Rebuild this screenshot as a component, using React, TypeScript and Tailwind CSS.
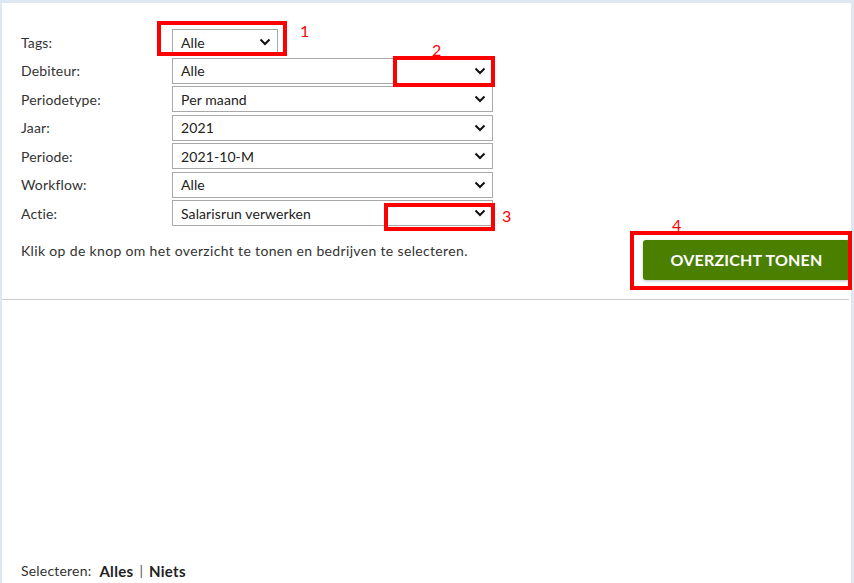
import React from 'react';

const font = { fontFamily: 'Lato, "Noto Sans", sans-serif' };

interface SelectProps {
  value: string;
  wide?: boolean;
}

function Chevron() {
  return (
    <svg width="12" height="8" viewBox="0 0 12 8" className="shrink-0">
      <polyline points="1.5,1.5 6,6 10.5,1.5" fill="none" stroke="#111" strokeWidth="2" />
    </svg>
  );
}

function FakeSelect({ value, wide = true }: SelectProps) {
  return (
    <div
      className={`flex h-[26px] items-center justify-between border border-[#a9a9a9] bg-white pl-[8px] pr-[6px] text-[14px] tracking-[0.1px] text-[#222] ${
        wide ? 'w-[321px]' : 'w-[106px]'
      }`}
    >
      <span>{value}</span>
      <Chevron />
    </div>
  );
}

const rows: { label: string; value: string; wide?: boolean }[] = [
  { label: 'Tags:', value: 'Alle', wide: false },
  { label: 'Debiteur:', value: 'Alle' },
  { label: 'Periodetype:', value: 'Per maand' },
  { label: 'Jaar:', value: '2021' },
  { label: 'Periode:', value: '2021-10-M' },
  { label: 'Workflow:', value: 'Alle' },
  { label: 'Actie:', value: 'Salarisrun verwerken' },
];

// red annotation boxes drawn over the screenshot
function Mark({ className, n, numClass }: { className: string; n: string; numClass: string }) {
  return (
    <>
      <div className={`pointer-events-none absolute border-[4px] border-[#ff0000] ${className}`} />
      <span className={`pointer-events-none absolute text-[16px] leading-none text-[#ff0000] ${numClass}`}>{n}</span>
    </>
  );
}

export default function App() {
  return (
    <div className="relative h-[583px] w-[854px] overflow-hidden bg-[#dfe7f0] pl-[2px] pr-[3px] pt-[3px]" style={font}>
      <div className="flex h-[580px] flex-col bg-white">
        <div className="flex flex-col gap-[2.5px] pl-[19px] pt-[26px]">
          {rows.map((r) => (
            <div key={r.label} className="flex items-center">
              <div className="w-[151px] text-[14px] tracking-[0.15px] text-[#333]">{r.label}</div>
              <FakeSelect value={r.value} wide={r.wide} />
            </div>
          ))}
        </div>

        <div className="mt-[14px] flex items-start justify-between pl-[19px] pr-[1px]">
          <p className="pt-[1px] text-[14px] leading-[20px] tracking-[0.34px] text-[#333]">
            Klik op de knop om het overzicht te tonen en bedrijven te selecteren.
          </p>
          <button className="h-[40px] w-[207px] rounded-[3px] bg-[#4a7f00] text-[16px] font-bold tracking-[0.2px] text-white shadow-[0_1px_3px_rgba(0,0,0,0.25)]">
            OVERZICHT TONEN
          </button>
        </div>

        <div className="mr-[2px] mt-[19px] border-t border-[#cccccc]" />

        <div className="flex-1" />

        <div className="flex items-center pb-[2px] pl-[19px] text-[14px] leading-[20px] text-[#333]">
          <span className="tracking-[0.2px]">Selecteren:</span>
          <b className="ml-[8px] text-[15px] tracking-[0.3px] text-[#222]">Alles</b>
          <span className="px-[6px] text-[#555]">|</span>
          <b className="text-[15px] tracking-[0.3px] text-[#222]">Niets</b>
        </div>
      </div>

      <Mark className="left-[157px] top-[21px] h-[35px] w-[130px]" n="1" numClass="left-[300px] top-[23px]" />
      <Mark className="left-[393px] top-[56px] h-[31px] w-[102px]" n="2" numClass="left-[432px] top-[42px]" />
      <Mark className="left-[384px] top-[203px] h-[28px] w-[111px]" n="3" numClass="left-[502px] top-[208px]" />
      <Mark className="left-[630px] top-[231px] h-[59px] w-[222px]" n="4" numClass="left-[672px] top-[217px]" />
    </div>
  );
}
